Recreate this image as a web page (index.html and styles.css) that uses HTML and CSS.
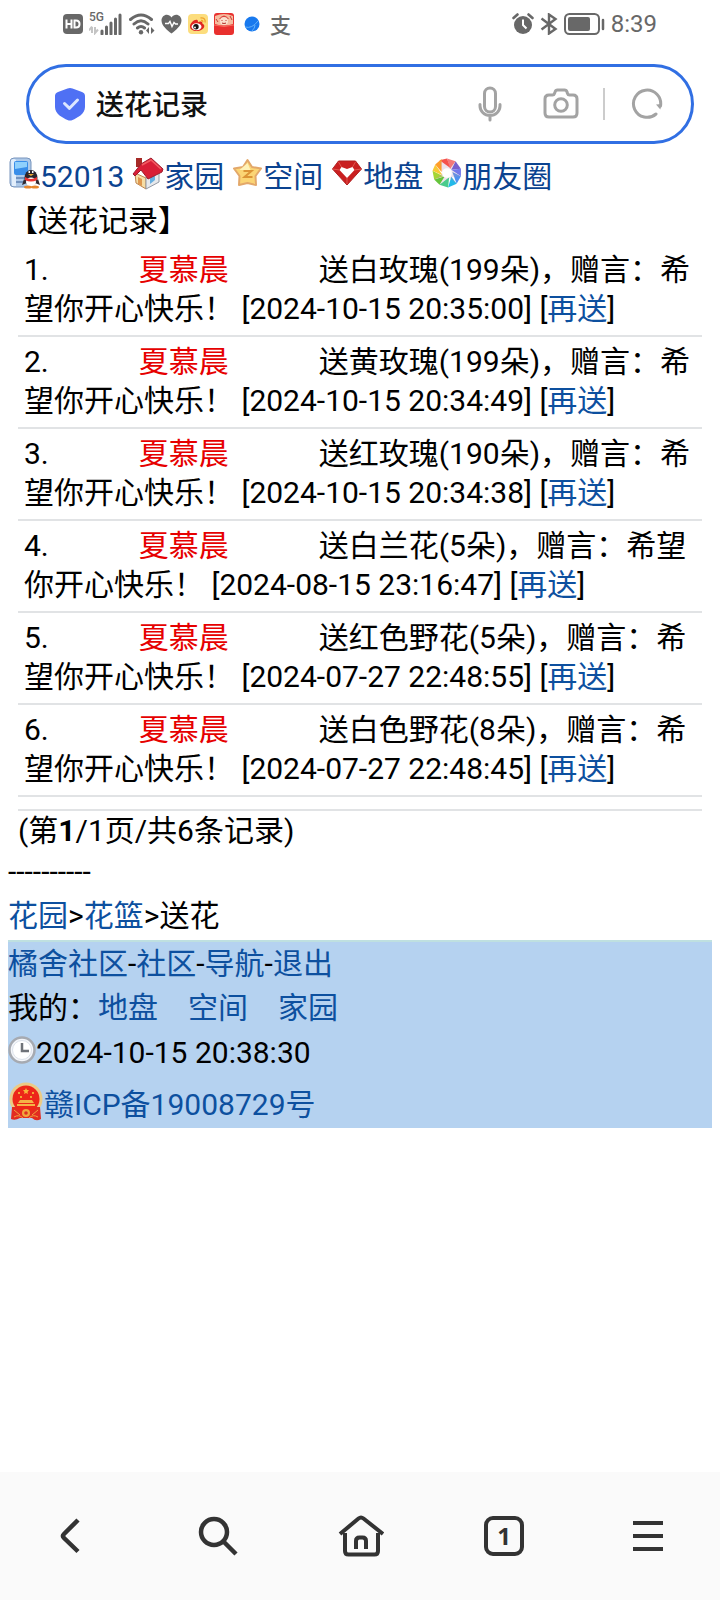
FILE: index.html
```html
<!DOCTYPE html>
<html lang="zh-CN">
<head>
<meta charset="utf-8">
<meta name="viewport" content="width=device-width, initial-scale=1">
<title>送花记录</title>
<link rel="stylesheet" href="styles.css">
</head>
<body>
<header>
  <div class="status">
    <div class="status-left">
      <svg width="20" height="20" viewBox="0 0 20 20"><rect width="20" height="20" rx="4" fill="#686868"/><path d="M3.500 5.500v9M8.500 5.500v9M3.500 10h5M11.500 6.500v7h1.500q3.500 0 3.500-3.500t-3.500-3.500z" fill="none" stroke="#fff" stroke-width="2"/></svg>
      <div class="signal">
        <span class="net">5G</span>
        <svg width="34" height="22" viewBox="0 0 34 22"><path d="M3 14v6M0 17.500l3-4M6 14v6l3-3.500" fill="none" stroke="#c4c4c4" stroke-width="2"/><path d="M13 18v3M17.500 14v7M22 10v11M26.500 6v15M31 2v19" stroke="#686868" stroke-width="3" stroke-linecap="round"/></svg>
      </div>
      <svg width="26" height="22" viewBox="0 0 26 22"><g fill="none" stroke="#686868" stroke-width="3" stroke-linecap="round"><path d="M1.500 6.500Q12 -2.500 22.500 6.500M5 11Q12 4.500 19 11M8.500 15q3.500-3 7 0"/></g><circle cx="12" cy="19.300" r="2.200" fill="#686868"/><path d="M20 14v7l-3-3.500zM22 14v7l3.500-3.500z" fill="#686868"/></svg>
      <svg width="21" height="20" viewBox="0 0 21 20"><path d="M10.500 19.500C6 16 .5 11.500.5 6.500c0-6 7-8 10-3 3-5 10-3 10 3 0 5-5.500 9.500-10 13z" fill="#686868"/><path d="M4 9.500h3.500l1.500-2 2 5 2-4 1.500 1.500H17" fill="none" stroke="#fff" stroke-width="1.400"/></svg>
      <svg width="20" height="20" viewBox="0 0 20 20"><rect width="20" height="20" rx="4" fill="#fcdd7d"/><path d="M2 12.500C2 9 7 4.500 9.500 6.200c1 .6.300 2 .3 2 2-1 5-1 4.700 1.600 2.500.7 2.500 4-.5 5.700-5 3-12 1.300-12-3z" fill="#df2621"/><ellipse cx="8.500" cy="12.800" rx="5" ry="3.500" fill="#fff"/><circle cx="8" cy="12.700" r="2.700" fill="#171313"/><circle cx="7" cy="13.500" r=".9" fill="#fff"/><path d="M12.500 4c3-.8 5.300 1.500 4.500 4.500M13 6.500c1.400-.2 2 .5 1.800 1.700" fill="none" stroke="#f1a52e" stroke-width="1.300"/></svg>
      <svg width="20" height="22" viewBox="0 0 20 22"><rect width="20" height="22" rx="3" fill="#e9302e"/><path d="M1 3q9-4 18 0v8q-9 3-18 0z" fill="#f5bc9f"/><path d="M5 6q5-7 10 0z" fill="#d9403a"/><circle cx="10" cy="8" r="4" fill="#fae1cf"/><path d="M7.500 7.500h1M11.500 7.500h1M8 10q2 1 4 0M2 6l2 3M16 3l2 4" stroke="#c83e35" stroke-width="1"/><path d="M0 12q10 3 20 0" fill="none" stroke="#f76a5d"/></svg>
      <svg class="globe" width="16" height="16" viewBox="0 0 16 16"><circle cx="8" cy="8" r="7.500" fill="#1879ee"/><path d="M1 11q7 2 13-6M8 15q3-3 3-6" fill="none" stroke="#63b1fa"/></svg>
      <span class="pay">支</span>
    </div>
    <div class="status-right">
      <svg width="22" height="22" viewBox="0 0 22 22"><circle cx="11" cy="12" r="9" fill="#686868"/><path d="M1.500 5l4-3.500M20.500 5l-4-3.500" stroke="#686868" stroke-width="2.600" stroke-linecap="round"/><path d="M11 6.500V12l3.500 3.500" fill="none" stroke="#fff" stroke-width="2"/></svg>
      <svg width="18" height="22" viewBox="0 0 18 22"><path d="M1.500 5.500L15.500 16 9 20.500v-19L15.500 6 1.500 16.500" fill="none" stroke="#686868" stroke-width="2.400"/></svg>
      <svg width="41" height="22" viewBox="0 0 41 22"><rect x="1" y="1" width="34" height="20" rx="4.500" fill="none" stroke="#686868" stroke-width="2"/><rect x="4" y="4" width="22" height="14" rx="2" fill="#686868"/><path d="M39 7v9" stroke="#686868" stroke-width="2.500" stroke-linecap="round"/></svg>
      <time class="clock">8:39</time>
    </div>
  </div>
  <form class="search">
    <svg width="32" height="34" viewBox="0 0 32 34"><path d="M13.500 1.500q2.500-1 5 0L28 5q3 1 3 4v11c0 7-8 11-12.500 13q-2.500 1-5 0C9 31 1 27 1 20V9q0-3 3-4z" fill="#4f70f4"/><path d="M10.500 16.500l5 4.800 8-8.300" fill="none" stroke="#dce6ff" stroke-width="3" stroke-linecap="round" stroke-linejoin="round"/></svg>
    <input class="query" type="text" value="送花记录" aria-label="搜索">
    <button class="tool" type="button" aria-label="语音"><svg width="24" height="36" viewBox="0 0 24 36"><g fill="none" stroke="#a3a3a3" stroke-width="3" stroke-linecap="round"><rect x="6.500" y="2" width="11" height="24" rx="5.500"/><path d="M2 18.500v1.500a10 9.500 0 0 0 20 0v-1.500M12 30v4"/></g></svg></button>
    <button class="tool" type="button" aria-label="拍照"><svg width="36" height="32" viewBox="0 0 36 32"><g fill="none" stroke="#a3a3a3" stroke-width="3" stroke-linejoin="round"><path d="M6 7h3.500q1.500 0 2-1.500l.5-1.500q.6-2 2.500-2h7q2 0 2.500 2l.5 1.500Q25 7 26.500 7H30q4 0 4 4v14q0 4-4 4H6q-4 0-4-4V11q0-4 4-4z"/><circle cx="18" cy="17" r="6.300"/></g></svg></button>
    <span class="divider"></span>
    <button class="tool" type="button" aria-label="刷新"><svg width="32" height="32" viewBox="0 0 32 32"><path d="M25 26A13.600 13.600 0 1 1 29.500 18" fill="none" stroke="#a3a3a3" stroke-width="3" stroke-linecap="round"/><path d="M25 16.500l5.800-.5-1.500 5.500z" fill="#a3a3a3"/></svg></button>
  </form>
</header>
<main>
  <nav class="links">
    <a href="#"><svg width="32" height="32" viewBox="0 0 32 32"><rect x="2" y="1" width="21" height="29" rx="4" fill="#aec9e8" stroke="#7895bd"/><path d="M3 3q3-2 5 0v26H4z" fill="#e2eefb"/><rect x="6" y="4" width="14" height="14" rx="2" fill="#398ee9"/><path d="M7 5h12v5l-12 2z" fill="#8fd0fc"/><path d="M8 21h9M8 25h9" stroke="#7293c0" stroke-width="2"/><ellipse cx="23" cy="21" rx="6.500" ry="8" fill="#29252d"/><path d="M16 22l-2 6 5-2zM30 22l2 6-5-2z" fill="#302a32"/><ellipse cx="23" cy="25" rx="5" ry="4.500" fill="#fff"/><path d="M17 20q6 4 12 0v3q-6 3-12 0z" fill="#ed3431"/><ellipse cx="20" cy="30" rx="4" ry="1.600" fill="#e6862d"/><ellipse cx="27" cy="30" rx="4" ry="1.600" fill="#e6862d"/><path d="M20 17h6l-3 2z" fill="#eeaa2f"/><path d="M20.500 15h1.500M24 15h1.500" stroke="#fff" stroke-width="2"/></svg>52013</a>
    <a href="#"><svg width="32" height="34" viewBox="0 0 32 34"><path d="M3 17l11 5v11L4 27z" fill="#f6dda4" stroke="#bd8550"/><path d="M14 22l13-8v12l-13 7z" fill="#e7e9ec" stroke="#9299a5"/><path d="M18 22l5-4v6l-5 4z" fill="#67afe1"/><path d="M6 21l4 2v7l-4-2z" fill="#df974e"/><path d="M4 2h6v9H4z" fill="#a52a27"/><path d="M9 8l10-6 12 11-1 3-14 7-7-9-6 6-2-2z" fill="#d91e36" stroke="#9e1e2e"/><path d="M10 9l9-5 10 9" fill="none" stroke="#f35c62" stroke-width="1.500"/></svg>家园</a>
    <a href="#"><svg width="31" height="30" viewBox="0 0 30 30"><path d="M15 2l4.500 7 9 1.500-5.500 7.500.5 9-8.500-2-8.500 2 .5-9-5.500-7.500 9-1.500z" fill="#fbd575" stroke="#e3a86a" stroke-width="2" stroke-linejoin="round"/><path d="M15 5l3 7H7z" fill="#fff2b7"/><path d="M11 13h8l-7 6h8" fill="none" stroke="#dc9436" stroke-width="2"/></svg>空间</a>
    <a href="#"><svg width="32" height="28" viewBox="0 0 31 28"><path d="M7 2h17l6 8-14.500 16L1 10z" fill="#c91f20" stroke="#b12020" stroke-linejoin="round"/><path d="M10 8l5.500 2L21 8l2 3-7.500 8L8 11z" fill="#fff"/><path d="M7 3l3 5M24 3l-3 5M1 10l7 1M30 10l-7 1M15.500 19v6" stroke="#e0564e" stroke-width="1"/></svg>地盘</a>
    <a href="#"><svg class="ring" width="30" height="30" viewBox="0 0 28 28"><path d="M7 2L14 .5 18 10z" fill="#f5534d"/><path d="M14 .5L22 3l-5 7z" fill="#f47879"/><path d="M22 3l5 7-9 1z" fill="#795fcd"/><path d="M27 10v7l-9-6z" fill="#7379eb"/><path d="M27 17l-4 7-4-11z" fill="#4e91f0"/><path d="M23 24l-8 3.500 3-10z" fill="#22b9e9"/><path d="M15 27.500L7 25l9-7z" fill="#4acb8c"/><path d="M7 25l-5-5 10-3z" fill="#65c43b"/><path d="M2 20L.5 12l10 5z" fill="#a5d534"/><path d="M.5 12L3 6l7 10z" fill="#f8c936"/><path d="M3 6l6-5v12z" fill="#ff9d29"/><path d="M7 2l11 8-8 4zM22 3l-5 7 1 1zM27 17l-9-6v7zM23 24l-5-7-3 1zM7 25l9-7-4-1zM2 20l10-3-2-3z" fill="#b98fae" opacity=".25"/><circle cx="14" cy="14" r="4.500" fill="#fff"/></svg>朋友圈</a>
  </nav>
  <h1 class="title">【送花记录】</h1>
  <div class="records">
    <div class="record">1.<span class="name">夏慕晨</span>送白玫瑰(199朵)，赠言：希望你开心快乐！ [2024-10-15 20:35:00] [<a href="#">再送</a>]</div>
    <div class="record">2.<span class="name">夏慕晨</span>送黄玫瑰(199朵)，赠言：希望你开心快乐！ [2024-10-15 20:34:49] [<a href="#">再送</a>]</div>
    <div class="record">3.<span class="name">夏慕晨</span>送红玫瑰(190朵)，赠言：希望你开心快乐！ [2024-10-15 20:34:38] [<a href="#">再送</a>]</div>
    <div class="record">4.<span class="name">夏慕晨</span>送白兰花(5朵)，赠言：希望你开心快乐！ [2024-08-15 23:16:47] [<a href="#">再送</a>]</div>
    <div class="record">5.<span class="name">夏慕晨</span>送红色野花(5朵)，赠言：希望你开心快乐！ [2024-07-27 22:48:55] [<a href="#">再送</a>]</div>
    <div class="record">6.<span class="name">夏慕晨</span>送白色野花(8朵)，赠言：希望你开心快乐！ [2024-07-27 22:48:45] [<a href="#">再送</a>]</div>
    <div class="pages">(第<b>1</b>/1页/共6条记录)</div>
  </div>
  <div class="line">----------</div>
  <nav class="line"><a href="#">花园</a>&gt;<a href="#">花篮</a>&gt;送花</nav>
  <footer class="foot">
    <div class="line"><a href="#">橘舍社区</a>-<a href="#">社区</a>-<a href="#">导航</a>-<a href="#">退出</a></div>
    <div class="line mine">我的：<a href="#">地盘</a><a href="#">空间</a><a href="#">家园</a></div>
    <div class="line iconed"><svg width="28" height="28" viewBox="0 0 28 28"><circle cx="14" cy="14" r="12.500" fill="#f4f6fa" stroke="#a6aab1" stroke-width="2.500"/><circle cx="14" cy="14" r="9.500" fill="#fff" stroke="#dce2eb"/><path d="M14 7v8h7" fill="none" stroke="#6e7278" stroke-width="2.500"/></svg><time>2024-10-15 20:38:30</time></div>
    <div class="line iconed icp"><svg width="36" height="40" viewBox="0 0 36 40"><circle cx="18" cy="17" r="16.500" fill="#eccb85"/><path d="M4 25h28l1 12q-5 3-9-1h-12q-5 3-9 1z" fill="#e22c21"/><circle cx="18" cy="17" r="13.500" fill="#ed2719"/><path d="M18 6l1 2h2l-1.500 2 .5 2-2-1-2 1 .5-2L15 8h2z" fill="#f8b43a"/><path d="M10 11h2M24 11h2M12 15h2M22 15h2" stroke="#f4a735" stroke-width="2"/><path d="M12 18h12l2 3H10zM9 22h18v2H9z" fill="#f5b446"/><circle cx="18" cy="31" r="4" fill="#f1a83c"/><circle cx="18" cy="31" r="1.800" fill="#db2f21"/><path d="M6 28l6 5M30 28l-6 5M6 35q5-3 9 1M30 35q-5-3-9 1" stroke="#f3a23d" stroke-width="1" fill="none"/></svg><a href="#">赣ICP备19008729号</a></div>
  </footer>
</main>
<nav class="bar">
  <button type="button" aria-label="后退"><svg width="40" height="44" viewBox="0 0 40 44"><path d="M26 6L12 20q-2 2 0 4l14 13.500" fill="none" stroke="#333" stroke-width="4.500"/></svg></button>
  <button type="button" aria-label="搜索"><svg width="44" height="44" viewBox="0 0 44 44"><g fill="none" stroke="#333" stroke-width="4.500"><circle cx="20" cy="18" r="13"/><path d="M29.500 27.500L42 40"/></g></svg></button>
  <button type="button" aria-label="主页"><svg width="48" height="44" viewBox="-2 0 48 44"><g fill="none" stroke="#333" stroke-width="4"><path d="M2 20L20.500 4.500q2.500-2 5 0L45 20"/><path d="M7 19v18q0 3.500 3.500 3.500h26q3.500 0 3.500-3.500V19"/><path d="M18 35v-8q0-3.500 3.500-3.500h3q3.500 0 3.500 3.500v8"/></g></svg></button>
  <button type="button" aria-label="标签页"><span class="tabs">1</span></button>
  <button type="button" aria-label="菜单"><svg width="30" height="32" viewBox="0 0 30 32"><path d="M0 3h30M0 16h30M0 29h30" stroke="#333" stroke-width="4"/></svg></button>
</nav>
</body>
</html>
```
FILE: styles.css
```css
* { box-sizing: border-box; }
body {
  margin: 0;
  min-height: 100vh;
  display: flex;
  flex-direction: column;
  background: #fff;
  color: #000;
  font: 30px/44px Roboto, "Noto Sans CJK SC", sans-serif;
  text-spacing-trim: space-all;
}
svg { display: block; flex: none; }
a { color: #0d509f; text-decoration: none; }
button { padding: 0; border: 0; background: none; font: inherit; color: inherit; }

.status {
  display: flex;
  justify-content: space-between;
  align-items: center;
  height: 48px;
  padding: 0 63px;
  color: #686868;
}
.status-left, .status-right { display: flex; align-items: center; gap: 6px; }
.signal { position: relative; }
.net {
  position: absolute;
  top: -2px;
  left: 0;
  font: 500 12px/12px Roboto, sans-serif;
}
.globe { margin: 0 4px; }
.pay { font: 500 21px/24px "Noto Sans CJK SC", sans-serif; }
.clock { font-size: 24px; line-height: 48px; }

.search {
  display: flex;
  align-items: center;
  height: 80px;
  margin: 16px 26px 11px;
  padding: 0 28px 0 25px;
  border: 3px solid #316fe3;
  border-radius: 40px;
}
.query {
  flex: 1;
  min-width: 0;
  margin-left: 10px;
  padding: 4px 0 0;
  border: 0;
  outline: 0;
  background: none;
  color: #111;
  font: 500 28px/40px Roboto, "Noto Sans CJK SC", sans-serif;
}
.tool { margin-left: 41px; }
.divider { width: 2px; height: 32px; margin-left: 24px; background: #ccc; }
.divider + .tool { margin-left: 26px; }

main { flex: 1; padding: 0 8px; }
.links { display: flex; gap: 8px; height: 44px; }
.links a { display: flex; align-items: center; color: #0b4390; }
.links svg { margin-bottom: 8px; }
.links .ring { margin-left: 1px; }
.title { margin: 0; font: inherit; }
.records { padding: 2px 10px 0; }
.record {
  padding: 5px 6px 7px;
  border-bottom: 2px solid #e1e3e5;
  line-height: 39px;
}
.name { margin: 0 90px; color: #e60000; }
.pages { margin-top: 12px; border-top: 2px solid #e1e3e5; line-height: 39px; }
.line { min-height: 44px; }
.foot { margin-top: 2px; border-top: 2px solid #bfe0e0; background: #b5d2f0; }
.mine a { margin-right: 30px; }
.iconed { display: flex; align-items: center; min-height: 46px; }
.iconed svg { margin-bottom: 6px; }
.icp { padding: 6px 0 0; }

.bar {
  display: grid;
  grid-template-columns: repeat(5, 1fr);
  height: 128px;
  background: #fafafa;
}
.bar button { display: flex; align-items: center; justify-content: center; }
.tabs {
  width: 40px;
  height: 40px;
  border: 4px solid #333;
  border-radius: 9px;
  color: #333;
  font: 700 24px/32px "Open Sans", sans-serif;
}
```
